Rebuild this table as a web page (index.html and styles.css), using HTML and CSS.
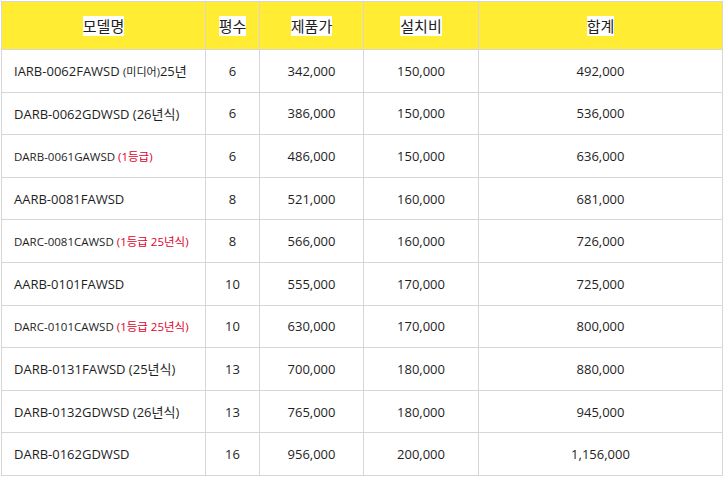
FILE: index.html
```html
<!DOCTYPE html>
<html lang="ko">
<head>
<meta charset="utf-8">
<link rel="stylesheet" href="styles.css">
</head>
<body>
<table class="price">
  <colgroup>
    <col class="c1"><col class="c2"><col class="c3"><col class="c4"><col class="c5">
  </colgroup>
  <thead>
    <tr>
      <th><span class="hl">모델명</span></th>
      <th><span class="hl">평수</span></th>
      <th><span class="hl">제품가</span></th>
      <th><span class="hl">설치비</span></th>
      <th><span class="hl">합계</span></th>
    </tr>
  </thead>
  <tbody>
    <tr><td class="model">IARB-0062FAWSD <span class="sm">(미디어)</span>25년</td><td>6</td><td>342,000</td><td>150,000</td><td>492,000</td></tr>
    <tr><td class="model">DARB-0062GDWSD (26년식)</td><td>6</td><td>386,000</td><td>150,000</td><td>536,000</td></tr>
    <tr><td class="model small">DARB-0061GAWSD <span class="red">(1등급)</span></td><td>6</td><td>486,000</td><td>150,000</td><td>636,000</td></tr>
    <tr><td class="model">AARB-0081FAWSD</td><td>8</td><td>521,000</td><td>160,000</td><td>681,000</td></tr>
    <tr><td class="model small">DARC-0081CAWSD <span class="red">(1등급 25년식)</span></td><td>8</td><td>566,000</td><td>160,000</td><td>726,000</td></tr>
    <tr><td class="model">AARB-0101FAWSD</td><td>10</td><td>555,000</td><td>170,000</td><td>725,000</td></tr>
    <tr><td class="model small">DARC-0101CAWSD <span class="red">(1등급 25년식)</span></td><td>10</td><td>630,000</td><td>170,000</td><td>800,000</td></tr>
    <tr><td class="model">DARB-0131FAWSD (25년식)</td><td>13</td><td>700,000</td><td>180,000</td><td>880,000</td></tr>
    <tr><td class="model">DARB-0132GDWSD (26년식)</td><td>13</td><td>765,000</td><td>180,000</td><td>945,000</td></tr>
    <tr><td class="model">DARB-0162GDWSD</td><td>16</td><td>956,000</td><td>200,000</td><td>1,156,000</td></tr>
  </tbody>
</table>
</body>
</html>
```

FILE: styles.css
```css
html, body {
  margin: 0;
  padding: 0;
  background: #ffffff;
}
body {
  padding: 1px 0 0 1px;
  font-family: "Open Sans", "Noto Sans CJK KR", sans-serif;
  color: #222222;
}
.price {
  border-collapse: collapse;
  width: 721px;
  table-layout: fixed;
}
.c1 { width: 204px; }
.c2 { width: 54px; }
.c3 { width: 104px; }
.c4 { width: 115px; }
.c5 { width: 244px; }
.price th, .price td {
  border: 1px solid #d6d6d6;
  padding: 0;
  text-align: center;
  font-weight: normal;
}
.price th {
  background: #ffec33;
  height: 47px;
  font-size: 15px;
  color: #222222;
}
.hl {
  background: #ffffff;
}
.price td {
  height: 41.6px;
  font-size: 13px;
  color: #1e1e1e;
}
.price td.model {
  text-align: left;
  padding-left: 12px;
  white-space: nowrap;
}
.price td.small {
  font-size: 11.5px;
}
.sm {
  font-size: 11px;
}
.red {
  color: #e0002b;
}
```
